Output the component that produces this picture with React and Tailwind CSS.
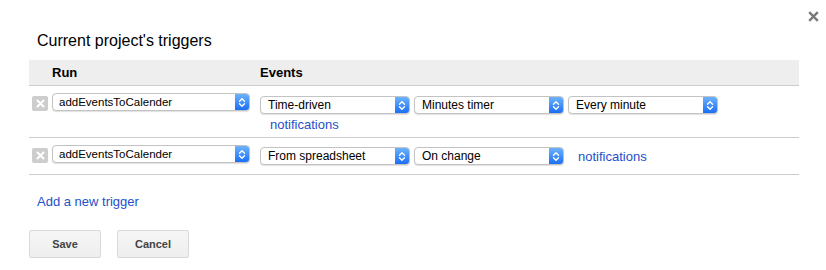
import React from 'react';

const rows = [
  {
    fn: 'addEventsToCalender',
    events: ['Time-driven', 'Minutes timer', 'Every minute'],
    notifyBelow: true,
  },
  {
    fn: 'addEventsToCalender',
    events: ['From spreadsheet', 'On change'],
    notifyBelow: false,
  },
];

function Chevrons() {
  return (
    <svg width="8" height="11" viewBox="0 0 8 11" fill="none">
      <path d="M1.5 4.2 L4 1.7 L6.5 4.2" stroke="white" strokeWidth="1.4" strokeLinecap="round" strokeLinejoin="round" />
      <path d="M1.5 6.8 L4 9.3 L6.5 6.8" stroke="white" strokeWidth="1.4" strokeLinecap="round" strokeLinejoin="round" />
    </svg>
  );
}

function Select({ label, width, small }) {
  return (
    <div
      className="flex h-[18px] rounded-[4px] border border-[#c3c3c3] bg-white shadow-[0_1px_1px_rgba(0,0,0,0.12)] overflow-hidden"
      style={{ width }}
    >
      <span
        className={`flex-1 leading-[16px] text-black whitespace-nowrap overflow-hidden ${
          small ? 'pl-[6px] text-[11.5px]' : 'pl-[7px] text-[12px]'
        }`}
      >
        {label}
      </span>
      <span className="w-[14px] flex items-center justify-center bg-gradient-to-b from-[#6cb2fb] to-[#1a6ef5]">
        <Chevrons />
      </span>
    </div>
  );
}

function RemoveBox() {
  return (
    <div className="w-[16px] h-[15px] rounded-[2px] bg-[#cdcdcd] flex items-center justify-center">
      <svg width="9" height="9" viewBox="0 0 9 9">
        <path d="M1.5 1.5 L7.5 7.5 M7.5 1.5 L1.5 7.5" stroke="white" strokeWidth="2" strokeLinecap="round" />
      </svg>
    </div>
  );
}

export default function App() {
  return (
    <div className="relative w-[826px] h-[270px] bg-white font-['Liberation_Sans',Arial,sans-serif]">
      <button className="absolute left-[808px] top-[11px]">
        <svg width="11" height="11" viewBox="0 0 11 11" className="block">
          <path d="M1.2 1.2 L9.8 9.8 M9.8 1.2 L1.2 9.8" stroke="#7a7a7a" strokeWidth="2.4" />
        </svg>
      </button>

      <div className="pl-[29px] pt-[32px]">
        <h2 className="pl-[8px] text-[16px] leading-[18px] text-black">Current project's triggers</h2>

        <div className="mt-[10px] w-[770px]">
          <div className="flex items-center h-[26px] bg-[#eeeeee] border-b border-[#cccccc] text-[13px] font-bold text-black">
            <span className="w-[231px] pl-[23px]">Run</span>
            <span>Events</span>
          </div>

          {rows.map((r, i) => (
            <div
              key={i}
              className={`flex border-b border-[#cccccc] ${r.notifyBelow ? 'h-[52px]' : 'h-[37px]'}`}
            >
              <div className="w-[231px] flex items-start gap-[4px] pl-[3px] pt-[7px]">
                <div className="mt-[3px]">
                  <RemoveBox />
                </div>
                <Select label={r.fn} width={198} small />
              </div>
              {r.notifyBelow ? (
                <div className="pt-[10px]">
                  <div className="flex gap-[4px]">
                    {r.events.map((e) => (
                      <Select key={e} label={e} width={150} />
                    ))}
                  </div>
                  <a className="block ml-[10px] mt-[3px] text-[13px] leading-[15px] text-[#2450c9]">notifications</a>
                </div>
              ) : (
                <div className="pt-[9px] flex items-center h-[27px]">
                  <div className="flex gap-[4px]">
                    {r.events.map((e) => (
                      <Select key={e} label={e} width={150} />
                    ))}
                  </div>
                  <a className="ml-[14px] text-[13px] leading-[15px] text-[#2450c9]">notifications</a>
                </div>
              )}
            </div>
          ))}
        </div>

        <a className="block mt-[19px] pl-[8px] text-[13px] leading-[15px] text-[#2450c9]">Add a new trigger</a>

        <div className="mt-[21px] flex gap-[16px]">
          <button className="w-[72px] h-[28px] rounded-[2px] border border-[#d9d9d9] bg-gradient-to-b from-[#f6f6f6] to-[#eeeeee] text-[11px] font-bold text-[#444444]">
            Save
          </button>
          <button className="w-[72px] h-[28px] rounded-[2px] border border-[#d9d9d9] bg-gradient-to-b from-[#f6f6f6] to-[#eeeeee] text-[11px] font-bold text-[#444444]">
            Cancel
          </button>
        </div>
      </div>
    </div>
  );
}
